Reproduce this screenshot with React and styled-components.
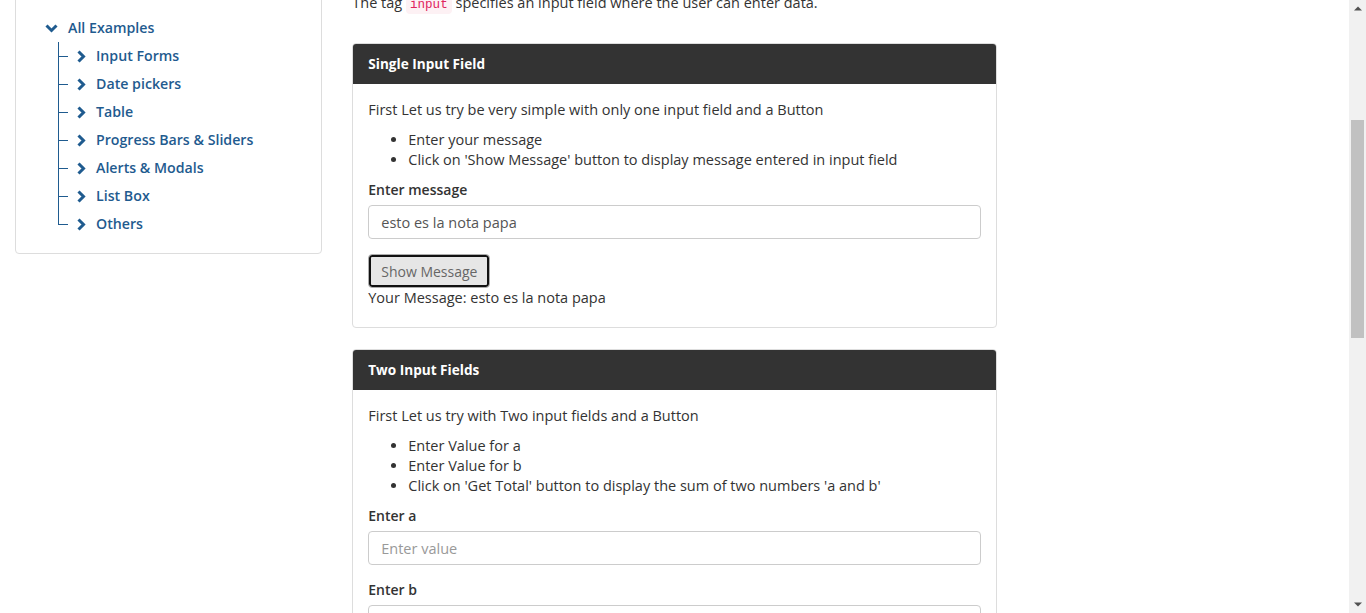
import { useLayoutEffect, useRef, useState } from "react";
import styled, { createGlobalStyle } from "styled-components";

const GlobalStyle = createGlobalStyle`
    html, body {
        margin: 0;
        padding: 0;
        overflow: hidden;
    }
    body {
        font-family: "Open Sans", "Lato", sans-serif;
        font-size: 14.5px;
        line-height: 20px;
        color: #333;
        background: #fff;
    }
    * {
        box-sizing: border-box;
    }
`;

const Shell = styled.div`
    display: flex;
    height: 100vh;
`;

const Viewport = styled.div`
    flex: 1;
    overflow-y: scroll;
    scrollbar-width: none;

    &::-webkit-scrollbar {
        display: none;
    }
`;

const Rail = styled.div`
    display: flex;
    flex-direction: column;
    width: 17px;
    background: #f1f1f1;
`;

const RailButton = styled.div`
    display: flex;
    align-items: center;
    justify-content: center;
    height: 17px;
    flex: none;
`;

const Track = styled.div`
    flex: 1;
    display: flex;
    flex-direction: column;
    padding: 0 2px;
`;

const TrackGap = styled.div`
    flex-basis: 0;
`;

const Thumb = styled.div`
    flex-basis: 0;
    background: #c1c1c1;
`;

const Page = styled.div`
    display: flex;
    flex-direction: column;
    min-height: 1630px;
`;

const SiteHeader = styled.header`
    display: flex;
    align-items: center;
    height: 150px;
    padding: 0 30px;
    font-size: 30px;
    font-weight: 700;
    color: #1f5b8f;
`;

const NavBar = styled.nav`
    display: flex;
    align-items: center;
    gap: 24px;
    height: 58px;
    padding: 0 30px;
    background: #333;
    color: #fff;
`;

const Layout = styled.div`
    display: grid;
    grid-template-columns: 25% 50% 25%;
    padding-top: 40px;
`;

const Column = styled.div`
    padding: 0 15px;
`;

const SideCard = styled.div`
    border: 1px solid #ddd;
    border-radius: 4px;
`;

const SideHeader = styled.div`
    height: 40px;
    padding: 10px 15px;
    font-weight: 700;
    background: #f5f5f5;
    border-bottom: 1px solid #ddd;
`;

const Tree = styled.ul`
    list-style: none;
    margin: 0;
    padding: 15px 14px 15px 29px;
`;

const TreeRow = styled.a`
    display: flex;
    align-items: center;
    height: 28px;
    gap: ${(p) => p.$gap}px;
    color: #1f5b8f;
    font-size: 14.2px;
    font-weight: 600;
    text-decoration: none;
`;

const ChildList = styled.ul`
    list-style: none;
    margin: 0 0 0 13px;
    padding: 0;
`;

const ChildItem = styled.li`
    position: relative;
    padding-left: 19px;

    &::before {
        content: "";
        position: absolute;
        left: 0;
        top: 0;
        height: ${(p) => (p.$last ? "50%" : "100%")};
        border-left: 1px solid #1f5b8f;
    }

    &::after {
        content: "";
        position: absolute;
        left: 0;
        top: 50%;
        width: 10px;
        border-top: 1px solid #1f5b8f;
    }
`;

const Title = styled.h3`
    margin: 0 0 10px;
    font-size: 22px;
    line-height: 25px;
    font-weight: 600;
`;

const Intro = styled.p`
    margin: 0 0 28px;
`;

const Code = styled.code`
    font-family: "Liberation Mono", monospace;
    font-size: 12.6px;
    padding: 2px 4px;
    color: #e0245e;
    background: #fdf1f4;
    border-radius: 4px;
`;

const Panel = styled.div`
    border: 1px solid #ddd;
    border-radius: 4px;
    margin-bottom: 21px;
    overflow: hidden;
`;

const PanelHeading = styled.div`
    height: 40px;
    padding: 10px 15px;
    background: #333;
    color: #fff;
    font-weight: 700;
    font-size: 13.6px;
`;

const PanelBody = styled.div`
    padding: 16px 15px 15px;
`;

const Text = styled.p`
    margin: 0 0 10px;
`;

const Bullets = styled.ul`
    margin: 0 0 10px;
    padding-left: 40px;
`;

const Group = styled.div`
    margin-bottom: 15px;
`;

const Label = styled.label`
    display: block;
    margin-bottom: 5px;
    font-weight: 600;
    font-size: 14px;
`;

const Input = styled.input`
    display: block;
    width: 100%;
    height: 34px;
    padding: 6px 12px;
    font-family: inherit;
    font-size: 14.5px;
    color: #555;
    border: 1px solid #ccc;
    border-radius: 4px;
    outline: none;

    &::placeholder {
        color: #999;
    }
`;

const Button = styled.button`
    height: 34px;
    padding: 6px 12px;
    font-family: inherit;
    font-size: 14px;
    color: #666;
    background: #e6e6e6;
    border: 1px solid #adadad;
    border-radius: 4px;
    box-shadow: inset 0 0 0 2px #111;
`;

const Result = styled.div`
    margin: 0 0 4px;
`;

const Footer = styled.footer`
    margin-top: auto;
    padding: 20px 30px;
    text-align: center;
    color: #777;
    border-top: 1px solid #eee;
`;

const menu = [
    "Input Forms",
    "Date pickers",
    "Table",
    "Progress Bars & Sliders",
    "Alerts & Modals",
    "List Box",
    "Others",
];

function Chevron({ down }) {
    return down ? (
        <svg width="13" height="9" viewBox="0 0 13 9">
            <path d="M1.5 1.5 L6.5 6.5 L11.5 1.5" fill="none" stroke="currentColor" strokeWidth="3" />
        </svg>
    ) : (
        <svg width="9" height="13" viewBox="0 0 9 13">
            <path d="M1.5 1.5 L6.5 6.5 L1.5 11.5" fill="none" stroke="currentColor" strokeWidth="3" />
        </svg>
    );
}

function Arrow({ up }) {
    return (
        <svg width="8" height="5" viewBox="0 0 8 5">
            <path d={up ? "M0 4.5 L4 0.5 L8 4.5 Z" : "M0 0.5 L4 4.5 L8 0.5 Z"} fill="#505050" />
        </svg>
    );
}

function App() {
    const viewRef = useRef(null);
    const [bar, setBar] = useState({ top: 0, size: 1 });

    const measure = () => {
        const el = viewRef.current;
        if (!el) return;
        setBar({ top: el.scrollTop / el.scrollHeight, size: el.clientHeight / el.scrollHeight });
    };

    useLayoutEffect(() => {
        viewRef.current.scrollTop = 290;
        measure();
    }, []);

    return (
        <Shell>
            <GlobalStyle />
            <Viewport ref={viewRef} onScroll={measure}>
                <Page>
                    <SiteHeader>Selenium Easy</SiteHeader>
                    <NavBar>
                        <span>Demo Home</span>
                        <span>Input Forms</span>
                        <span>Date pickers</span>
                    </NavBar>
                    <Layout>
                        <Column>
                            <SideCard>
                                <SideHeader>Menu List</SideHeader>
                                <Tree>
                                    <li>
                                        <TreeRow href="#" $gap={10}>
                                            <Chevron down />
                                            All Examples
                                        </TreeRow>
                                        <ChildList>
                                            {menu.map((item, i) => (
                                                <ChildItem key={item} $last={i === menu.length - 1}>
                                                    <TreeRow href="#" $gap={10}>
                                                        <Chevron />
                                                        {item}
                                                    </TreeRow>
                                                </ChildItem>
                                            ))}
                                        </ChildList>
                                    </li>
                                </Tree>
                            </SideCard>
                        </Column>
                        <Column>
                            <Title>This would be your first example to start with Selenium.</Title>
                            <Intro>
                                The tag <Code>input</Code> specifies an input field where the user can enter data.
                            </Intro>
                            <Panel>
                                <PanelHeading>Single Input Field</PanelHeading>
                                <PanelBody>
                                    <Text>First Let us try be very simple with only one input field and a Button</Text>
                                    <Bullets>
                                        <li>Enter your message</li>
                                        <li>Click on 'Show Message' button to display message entered in input field</li>
                                    </Bullets>
                                    <Group>
                                        <Label>Enter message</Label>
                                        <Input defaultValue="esto es la nota papa" placeholder="Please enter your Message" />
                                    </Group>
                                    <Button>Show Message</Button>
                                    <Result>Your Message: esto es la nota papa</Result>
                                </PanelBody>
                            </Panel>
                            <Panel>
                                <PanelHeading>Two Input Fields</PanelHeading>
                                <PanelBody>
                                    <Text>First Let us try with Two input fields and a Button</Text>
                                    <Bullets>
                                        <li>Enter Value for a</li>
                                        <li>Enter Value for b</li>
                                        <li>Click on 'Get Total' button to display the sum of two numbers 'a and b'</li>
                                    </Bullets>
                                    <Group>
                                        <Label>Enter a</Label>
                                        <Input placeholder="Enter value" />
                                    </Group>
                                    <Group>
                                        <Label>Enter b</Label>
                                        <Input placeholder="Enter value" />
                                    </Group>
                                    <Button>Get Total</Button>
                                    <Result>Total a + b = </Result>
                                </PanelBody>
                            </Panel>
                        </Column>
                        <Column />
                    </Layout>
                    <Footer>© Selenium Easy</Footer>
                </Page>
            </Viewport>
            <Rail>
                <RailButton>
                    <Arrow up />
                </RailButton>
                <Track>
                    <TrackGap style={{ flexGrow: bar.top }} />
                    <Thumb style={{ flexGrow: bar.size }} />
                    <TrackGap style={{ flexGrow: Math.max(0, 1 - bar.top - bar.size) }} />
                </Track>
                <RailButton>
                    <Arrow />
                </RailButton>
            </Rail>
        </Shell>
    );
}

export default App;
